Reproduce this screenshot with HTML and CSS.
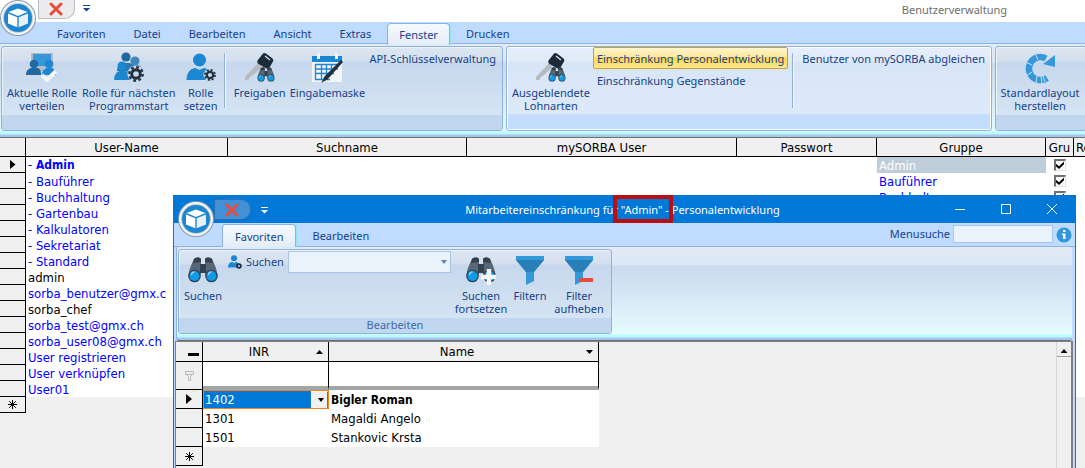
FILE: index.html
```html
<!DOCTYPE html>
<html lang="de">
<head>
    <meta charset="UTF-8">
    <meta name="viewport" content="width=device-width, initial-scale=1.0">
    <title>Benutzerverwaltung</title>
    <link rel="stylesheet" href="styles.css">
</head>
<body>

    <!-- Icons -->
    <svg class="sprite" aria-hidden="true">
        <symbol id="cube" viewBox="0 0 38 38">
            <circle cx="19" cy="19" r="18" fill="#8d9aa8"/>
            <circle cx="19" cy="19" r="17" fill="#f4f6f8"/>
            <circle cx="19" cy="19" r="15" fill="#c3cad2"/>
            <circle cx="19" cy="19" r="14" fill="#1c86d1"/>
            <path d="M19 9.500l9.500 3.500L19 17l-9.500-4z" fill="#fff"/>
            <path d="M9 14.500l9.300 3.700v10L9 24.500z" fill="#fff"/>
            <path d="M29 14.500l-9.300 3.700v10l9.300-3.700z" fill="#e6f1fa"/>
        </symbol>
        <symbol id="cross" viewBox="0 0 14 14">
            <path d="M2 2l10 10M12 2L2 12" stroke="#e74c3c" stroke-width="3" stroke-linecap="round"/>
        </symbol>
        <symbol id="person" viewBox="0 0 28 28">
            <circle cx="13" cy="7" r="6.500" fill="#1c86d1"/>
            <path d="M0 27c0-7 4-12 9-12l4 2 4-2c5 0 9 5 9 12z" fill="#1c86d1"/>
        </symbol>
        <symbol id="gear" viewBox="0 0 16 16">
            <circle cx="8" cy="8" r="4.300" fill="none" stroke="#22313f" stroke-width="3"/>
            <circle cx="8" cy="8" r="6.700" fill="none" stroke="#22313f" stroke-width="2.400" stroke-dasharray="2.700 2.560"/>
        </symbol>
        <symbol id="binoculars" viewBox="0 0 30 26">
            <path d="M6 2c2-2 6-2 7 0v15H1C1 11 4 7 6 2z" fill="#566778"/>
            <path d="M24 2c-2-2-6-2-7 0v15h12C29 11 26 7 24 2z" fill="#566778"/>
            <path d="M6 2c2-2 6-2 7 0v3L5 6zM24 2c-2-2-6-2-7 0v3l8 1z" fill="#34424f"/>
            <path d="M12 7h6v9h-6z" fill="#34424f"/>
            <circle cx="6.500" cy="19" r="6.300" fill="#34424f"/>
            <circle cx="23.500" cy="19" r="6.300" fill="#34424f"/>
            <circle cx="6.500" cy="19" r="5" fill="#0d9ae6"/>
            <circle cx="23.500" cy="19" r="5" fill="#0d9ae6"/>
            <path d="M3.500 18a3 3 0 0 1 3-3M20.500 18a3 3 0 0 1 3-3" fill="none" stroke="#8fd3f8" stroke-width="1.300"/>
        </symbol>
        <symbol id="roles-assign" viewBox="0 0 32 32">
            <path d="M5 1h22v15H5z" fill="#b4bcc3"/>
            <path d="M7 2h18v12H7z" fill="#3598db"/>
            <path d="M13 16h5v3h-5z" fill="#b4bcc3"/>
            <circle cx="8" cy="12" r="4.300" fill="#2068a0"/>
            <path d="M0 23c0-5 3-7 6-7h5c3 0 4 2 4 7z" fill="#2068a0"/>
            <circle cx="23" cy="12" r="4.300" fill="#1c86d1"/>
            <path d="M16 23c0-5 3-7 5-7h4c3 0 5 2 5 7z" fill="#1c86d1"/>
            <path d="M16 23l5 5 9-9" fill="none" stroke="#f4f6f8" stroke-width="4"/>
        </symbol>
        <symbol id="roles-next" viewBox="0 0 32 32">
            <circle cx="22" cy="9" r="4.600" fill="#3e88bb"/>
            <path d="M14 21c0-5 3-8 6-8h4c3 0 5 2 5 6v2z" fill="#3e88bb"/>
            <circle cx="13" cy="5" r="4.600" fill="#2068a0"/>
            <path d="M4 19c0-5 3-8 6-8h6c3 0 5 3 5 8z" fill="#2a78b0"/>
            <circle cx="9" cy="14" r="4.500" fill="#1c86d1"/>
            <path d="M1 28c0-5 3-9 6-9h5c4 0 7 3 7 9z" fill="#1c86d1"/>
            <circle cx="23" cy="22" r="8.600" fill="#c9d9ea"/>
            <use href="#gear" x="15" y="14" width="16" height="16"/>
        </symbol>
        <symbol id="role-set" viewBox="0 0 32 32">
            <use href="#person" x="1" y="1" width="29" height="28"/>
            <circle cx="25" cy="23" r="6.500" fill="#c9d9ea"/>
            <use href="#gear" x="19" y="17" width="12" height="12"/>
        </symbol>
        <symbol id="key" viewBox="0 0 32 32">
            <path d="M14 11L1 25v3h3l2-3 3-2 9-8z" fill="#b4babf"/>
            <path d="M19 1.500q1.500-1 3 0l6.500 5q1.500 1.500.5 3l-3.500 6q-1 1.500-3 1l-8-4.500q-2-1.500-1-3.500z" fill="#1c2b39"/>
            <path d="M21 4l5 4" stroke="#dfe6ec" stroke-width="1.200"/>
            <use href="#binoculars" x="13" y="15" width="18" height="15"/>
        </symbol>
        <symbol id="calendar" viewBox="0 0 32 32">
            <path d="M1 4h30v26H1z" fill="#f2f4f6"/>
            <path d="M1 4h30v6H1z" fill="#1c86d1"/>
            <path d="M6 1h3v6H6zM24 1h3v6h-3z" fill="#f2f4f6"/>
            <path d="M4 12.500h23M4 17h23M4 21.500h19M4 27.500h15M4.500 12v16M10.500 12v16M15.500 12v15M20.500 12v11M26.500 12v4" stroke="#1c86d1" stroke-width="1.300"/>
            <path d="M30 9l1 1-15 17-4 2 2-4z" fill="#22313f" stroke="#22313f" stroke-width="1.500"/>
        </symbol>
        <symbol id="reload" viewBox="0 0 32 32">
            <path d="M22 6.500A11.500 11.500 0 1 0 23 26" fill="none" stroke="#3598db" stroke-width="6.500"/>
            <path d="M31 3v12l-12-3z" fill="#3598db"/>
            <path d="M11 1l3 7M1 10l7 3M2 24l6-4M12 31l1-7M18 31l-1-7M21 30l-2-6" stroke="#d3e0f0"/>
        </symbol>
        <symbol id="search" viewBox="0 0 32 32">
            <use href="#binoculars" x="1" y="2" width="30" height="26"/>
        </symbol>
        <symbol id="search-next" viewBox="0 0 32 32">
            <use href="#binoculars" x="1" y="2" width="30" height="26"/>
            <path d="M24 14v16M16 22h15" stroke="#f4f6f8" stroke-width="4.500"/>
        </symbol>
        <symbol id="filter" viewBox="0 0 32 32">
            <path d="M2 1h28v4L20 17v9l-8 4V17L2 5z" fill="#3598db"/>
            <path d="M2 5h28L20 17h-8z" fill="#2980b9"/>
        </symbol>
        <symbol id="filter-off" viewBox="0 0 32 32">
            <use href="#filter" width="32" height="32"/>
            <path d="M16 23h14v4H16z" fill="#e74c3c"/>
        </symbol>
        <symbol id="info" viewBox="0 0 16 16">
            <circle cx="8" cy="8" r="7.500" fill="#2f97dd"/>
            <path d="M7 3h2.500v2H7zM6 6.500h3.500V12H7V8H6z" fill="#fff"/>
        </symbol>
        <symbol id="more" viewBox="0 0 7 7">
            <path d="M0 0h7v1H0zM0 3h7L3.500 6.500z" fill="currentColor"/>
        </symbol>
        <symbol id="star" viewBox="0 0 9 9">
            <path d="M4.500 0v9M0 4.500h9M1.200 1.200l6.600 6.600M7.800 1.200L1.200 7.800" stroke="#000"/>
        </symbol>
    </svg>

    <div class="window">
        <header class="titlebar">
            <button class="orb" aria-label="Menü"><svg><use href="#cube"/></svg></button>
            <div class="quick">
                <button aria-label="Schliessen"><svg><use href="#cross"/></svg></button>
            </div>
            <button class="quick-more" aria-label="Anpassen"><svg><use href="#more"/></svg></button>
            <h1>Benutzerverwaltung</h1>
        </header>

        <nav class="tabs">
            <button>Favoriten</button>
            <button>Datei</button>
            <button>Bearbeiten</button>
            <button>Ansicht</button>
            <button>Extras</button>
            <button class="active">Fenster</button>
            <button>Drucken</button>
        </nav>

        <div class="ribbon">
            <section class="group group-roles">
                <div class="tools">
                    <button class="tool"><svg><use href="#roles-assign"/></svg>Aktuelle Rolle<br>verteilen</button>
                    <button class="tool wide"><svg><use href="#roles-next"/></svg>Rolle für nächsten<br>Programmstart</button>
                    <button class="tool slim"><svg><use href="#role-set"/></svg>Rolle<br>setzen</button>
                    <span class="divider"></span>
                    <button class="tool small"><svg><use href="#key"/></svg>Freigaben</button>
                    <button class="tool"><svg><use href="#calendar"/></svg>Eingabemaske</button>
                    <div class="links">
                        <button>API-Schlüsselverwaltung</button>
                    </div>
                </div>
                <div class="caption"></div>
            </section>
            <section class="group group-limits hot">
                <div class="tools">
                    <button class="tool medium"><svg><use href="#key"/></svg>Ausgeblendete<br>Lohnarten</button>
                    <div class="links">
                        <button class="selected">Einschränkung Personalentwicklung</button>
                        <button>Einschränkung Gegenstände</button>
                    </div>
                    <span class="divider"></span>
                    <div class="links">
                        <button>Benutzer von mySORBA abgleichen</button>
                    </div>
                </div>
                <div class="caption"></div>
            </section>
            <section class="group group-layout">
                <div class="tools">
                    <button class="tool medium"><svg><use href="#reload"/></svg>Standardlayout<br>herstellen</button>
                </div>
                <div class="caption"></div>
            </section>
        </div>

        <table class="grid users">
            <colgroup>
                <col class="c-head"><col class="c-user"><col class="c-search"><col class="c-mysorba"><col class="c-pass"><col class="c-group"><col class="c-gru"><col>
            </colgroup>
            <thead>
                <tr><th></th><th>User-Name</th><th>Suchname</th><th>mySORBA User</th><th>Passwort</th><th>Gruppe</th><th>Gru</th><th class="cut">Re</th></tr>
            </thead>
            <tbody>
                <tr><th><i class="current"></i></th><td>- <b>Admin</b></td><td></td><td></td><td></td><td class="marked">Admin</td><td class="check"><input type="checkbox" aria-label="Gruppe Admin" checked></td><td></td></tr>
                <tr><th></th><td>- Bauführer</td><td></td><td></td><td></td><td>Bauführer</td><td class="check"><input type="checkbox" aria-label="Gruppe Bauführer" checked></td><td></td></tr>
                <tr><th></th><td>- Buchhaltung</td><td></td><td></td><td></td><td>Buchhaltung</td><td class="check"><input type="checkbox" aria-label="Gruppe Buchhaltung" checked></td><td></td></tr>
                <tr><th></th><td>- Gartenbau</td><td colspan="6"></td></tr>
                <tr><th></th><td>- Kalkulatoren</td><td colspan="6"></td></tr>
                <tr><th></th><td>- Sekretariat</td><td colspan="6"></td></tr>
                <tr><th></th><td>- Standard</td><td colspan="6"></td></tr>
                <tr><th></th><td class="plain">admin</td><td colspan="6"></td></tr>
                <tr><th></th><td>sorba_benutzer@gmx.c</td><td colspan="6"></td></tr>
                <tr><th></th><td class="plain">sorba_chef</td><td colspan="6"></td></tr>
                <tr><th></th><td>sorba_test@gmx.ch</td><td colspan="6"></td></tr>
                <tr><th></th><td>sorba_user08@gmx.ch</td><td colspan="6"></td></tr>
                <tr><th></th><td>User registrieren</td><td colspan="6"></td></tr>
                <tr><th></th><td>User verknüpfen</td><td colspan="6"></td></tr>
                <tr><th></th><td>User01</td><td colspan="6"></td></tr>
                <tr class="new"><th><svg><use href="#star"/></svg></th><td colspan="7"></td></tr>
            </tbody>
        </table>
    </div>

    <div class="dialog" role="dialog" aria-labelledby="dialog-title">
        <header class="titlebar">
            <button class="orb" aria-label="Menü"><svg><use href="#cube"/></svg></button>
            <div class="quick">
                <button aria-label="Schliessen"><svg><use href="#cross"/></svg></button>
            </div>
            <button class="quick-more" aria-label="Anpassen"><svg><use href="#more"/></svg></button>
            <h2 id="dialog-title">Mitarbeitereinschränkung für <span class="mark">"Admin" -</span> Personalentwicklung</h2>
            <div class="controls">
                <button aria-label="Minimieren"><svg viewBox="0 0 10 10"><path d="M0 5.500h10"/></svg></button>
                <button aria-label="Maximieren"><svg viewBox="0 0 10 10"><path d="M.5.5h9v9h-9z"/></svg></button>
                <button aria-label="Fenster schliessen"><svg viewBox="0 0 10 10"><path d="M0 0l10 10M10 0L0 10"/></svg></button>
            </div>
        </header>

        <nav class="tabs">
            <button class="active">Favoriten</button>
            <button>Bearbeiten</button>
            <label class="menu-search">Menusuche <input type="text"></label>
            <button class="info" aria-label="Info"><svg><use href="#info"/></svg></button>
        </nav>

        <div class="ribbon">
            <section class="group group-edit">
                <div class="tools">
                    <button class="tool slim"><svg><use href="#search"/></svg>Suchen</button>
                    <div class="finder">
                        <svg viewBox="0 0 14 14"><use href="#person" width="13" height="13"/><circle cx="11" cy="11" r="2.800" fill="#22313f"/><circle cx="11" cy="11" r="1" fill="#c9d9ea"/></svg>
                        <label for="finder">Suchen</label>
                        <span class="combo"><select id="finder"><option></option></select></span>
                    </div>
                    <button class="tool small"><svg><use href="#search-next"/></svg>Suchen<br>fortsetzen</button>
                    <button class="tool narrow"><svg><use href="#filter"/></svg>Filtern</button>
                    <button class="tool small"><svg><use href="#filter-off"/></svg>Filter<br>aufheben</button>
                </div>
                <div class="caption">Bearbeiten</div>
            </section>
        </div>

        <div class="pane">
            <table class="grid staff">
                <colgroup><col class="c-head"><col class="c-inr"><col class="c-name"></colgroup>
                <thead>
                    <tr><th><i class="minus"></i></th><th class="sortable">INR<i class="up"></i></th><th class="sortable">Name<i class="down"></i></th></tr>
                </thead>
                <tbody>
                    <tr class="filters">
                        <th><svg viewBox="0 0 9 11"><path d="M.5 1.500h8v3h-8zM1.500 4.500l2 2v4h2v-4l2-2" fill="none" stroke="#b8b8b8"/></svg></th>
                        <td><input type="text" aria-label="Filter INR"></td>
                        <td><input type="text" aria-label="Filter Name"></td>
                    </tr>
                    <tr>
                        <th><i class="current"></i></th>
                        <td class="editing"><span class="combo"><select aria-label="INR"><option>1402</option></select></span></td>
                        <td><b>Bigler Roman</b></td>
                    </tr>
                    <tr><th></th><td>1301</td><td>Magaldi Angelo</td></tr>
                    <tr><th></th><td>1501</td><td>Stankovic Krsta</td></tr>
                    <tr class="new"><th><svg><use href="#star"/></svg></th><td colspan="2"></td></tr>
                </tbody>
            </table>
            <div class="scrollbar"><button aria-label="Nach oben"><i class="up"></i></button></div>
        </div>
    </div>

</body>
</html>
```
FILE: styles.css
```css
* {
    box-sizing: border-box;
}
body {
    margin: 0;
    height: 100vh;
    overflow: hidden;
    background: #f0f0f0;
    color: #15428b;
    font: 11px/13px "Noto Sans", "Open Sans", sans-serif;
}
button {
    border: 0;
    padding: 0;
    background: none;
    color: inherit;
    font: inherit;
    white-space: nowrap;
}
svg {
    display: block;
}
.sprite {
    position: absolute;
    width: 0;
    height: 0;
}

/* Title bars */
.titlebar {
    position: relative;
    display: flex;
    align-items: flex-start;
    height: 22px;
    background: #fff;
}
.orb {
    position: absolute;
    left: -1px;
    top: -1px;
    z-index: 2;
}
.orb svg {
    width: 38px;
    height: 38px;
}
.quick {
    width: 37px;
    height: 19px;
    margin-left: 38px;
    padding: 2px 0 0 9px;
    border: 1px solid #b9bdc2;
    border-top: 0;
    border-radius: 0 0 10px 0;
    background: #ececee;
}
.quick svg {
    width: 16px;
    height: 14px;
}
.quick-more {
    margin: 5px 0 0 8px;
    color: #15428b;
}
.quick-more svg {
    width: 7px;
    height: 7px;
}
h1, h2 {
    margin: 0;
    font-size: 11px;
    font-weight: normal;
    white-space: nowrap;
}
h1 {
    margin: 3px 78px 0 auto;
    color: #6d6d6d;
}

/* Tabs */
.tabs {
    display: flex;
    height: 22px;
    padding-left: 43px;
    border-bottom: 1px solid #8db2e3;
    background: #bfdbff;
}
.tabs button {
    padding: 2px 12px 0;
    margin: 0 2px;
}
.tabs .active {
    height: 22px;
    margin-top: 1px;
    padding: 0 11px;
    border: 1px solid #8db2e3;
    border-bottom: 0;
    border-radius: 4px 4px 0 0;
    background: linear-gradient(#f6faff, #e3ecf7);
    box-shadow: 1px 0 1px #8fe4f4;
    z-index: 1;
}

/* Ribbon */
.ribbon {
    display: flex;
    gap: 3px;
    height: 94px;
    padding: 2px 1px 6px;
    border-bottom: 1px solid #707070;
    background: linear-gradient(#e3ebf5, #dce8f6 18px, #c9d9ed 19px, #e5fbff 87px, #b8fafe 88px, #b8fafe 90px, #a9c6ea 91px, #a9c6ea);
    overflow: hidden;
}
.group {
    display: flex;
    flex-direction: column;
    flex: none;
    border: 1px solid #8db2dc;
    border-radius: 3px;
    background: linear-gradient(#dde6f1, #d4dfee 14px, #c6d7ed 15px, #dae8f5);
    box-shadow: inset 1px 1px 0 #edf3fa;
}
.group.hot {
    background: linear-gradient(#e6eefa, #e0eaf8 14px, #d8e5f7 15px, #dfebfa);
    box-shadow: inset 0 0 0 1px #fff;
}
.group-roles {
    width: 502px;
}
.group-limits {
    width: 486px;
}
.group-layout {
    width: 92px;
}
.tools {
    display: flex;
    flex: 1;
    padding: 0 2px;
}
.caption {
    height: 15px;
    background: #c1d7f0;
    color: #3e6aaa;
    text-align: center;
}
.hot .caption {
    margin: 0 1px 1px;
    background: #c5ddfd;
}
.tool {
    display: flex;
    flex-direction: column;
    align-items: center;
    width: 76px;
    padding-top: 5px;
}
.tool svg {
    width: 32px;
    height: 32px;
    margin-bottom: 2px;
}
.tool.wide {
    width: 98px;
}
.tool.medium {
    width: 84px;
}
.tool.small {
    width: 60px;
}
.tool.slim {
    width: 46px;
}
.tool.narrow {
    width: 42px;
}
.divider {
    width: 2px;
    height: 55px;
    margin: 6px 4px 0;
    border-left: 1px solid #8fb1da;
    border-right: 1px solid #f2f7fd;
}
.group-roles .divider {
    margin-left: 0;
}
.links {
    display: flex;
    flex-direction: column;
    align-items: flex-start;
}
.links button {
    height: 22px;
    padding: 0 3px;
    border: 1px solid transparent;
    border-radius: 2px;
}
.links .selected {
    border-color: #c9a13c;
    background: linear-gradient(#fff5cf, #ffe79a 45%, #ffd54a 50%, #ffe98b);
}

/* Data grids */
.grid {
    border-collapse: separate;
    border-spacing: 0;
    table-layout: fixed;
    background: #fff;
    color: #000;
    font: 13px/15px "DejaVu Sans Condensed", "DejaVu Sans", sans-serif;
}
.grid b {
    font-size: 12px;
}
.grid th, .grid td {
    overflow: hidden;
    padding: 0 2px;
    text-align: left;
    white-space: nowrap;
}
.grid th {
    padding: 0;
    border-right: 1px solid #000;
    border-bottom: 1px solid #000;
    background: #f0f0f0;
    font-weight: normal;
    text-align: center;
}
.grid th svg {
    width: 9px;
    height: 9px;
    margin: 0 auto;
}
.grid .new td {
    background: #f0f0f0;
}
.c-head {
    width: 26px;
}
.current {
    display: block;
    width: 6px;
    height: 10px;
    margin: 0 auto;
    background: #000;
    clip-path: polygon(0 0, 100% 50%, 0 100%);
}
.up, .down {
    display: inline-block;
    width: 7px;
    height: 4px;
    background: #000;
}
.up {
    clip-path: polygon(50% 0, 100% 100%, 0 100%);
}
.down {
    clip-path: polygon(0 0, 100% 0, 50% 100%);
}

.users {
    width: 100%;
}
.users thead tr {
    height: 19px;
}
.users tbody tr {
    height: 16px;
}
.users td {
    color: #0000ff;
}
.users .plain {
    color: #000;
}
.users .marked {
    background: #bfccda;
    color: #fff;
}
.users .cut {
    padding-left: 2px;
    border-right: 0;
    text-align: left;
}
.c-user {
    width: 202px;
}
.c-search {
    width: 239px;
}
.c-mysorba {
    width: 270px;
}
.c-pass {
    width: 140px;
}
.c-group {
    width: 169px;
}
.c-gru {
    width: 28px;
}
.grid .check {
    padding: 0;
    line-height: 0;
    text-align: center;
}
.check input {
    appearance: none;
    width: 12px;
    height: 12px;
    margin: 0;
    border: 1px solid #e3e3e3;
    border-top: 2px solid #707070;
    border-left: 2px solid #707070;
    background: #fff;
}
.check input:checked::after {
    content: "";
    display: block;
    width: 8px;
    height: 8px;
    background: #000;
    clip-path: polygon(0 35%, 38% 65%, 100% 5%, 100% 40%, 38% 100%, 0 70%);
}

/* Dialog window */
.dialog {
    position: absolute;
    left: 173px;
    right: 9px;
    top: 195px;
    bottom: 0;
    display: flex;
    flex-direction: column;
    border: 1px solid #0078d7;
    border-width: 0 1px;
    background: #bfdbff;
}
.dialog .titlebar {
    flex: none;
    height: 28px;
    background: #0078d7;
    color: #fff;
}
.dialog .orb {
    left: 3px;
    top: 5px;
}
.dialog .quick {
    height: 21px;
    margin: 4px 0 0 40px;
    padding-top: 3px;
    border: 1px solid #2c6fae;
    border-radius: 0 10px 10px 0;
    background: #4291d6;
}
.dialog .quick-more {
    margin: 12px 0 0 10px;
    color: #fff;
}
h2 {
    flex: 1;
    padding: 8px 0 0 40px;
    text-align: center;
}
.mark {
    position: relative;
}
.mark::after {
    content: "";
    position: absolute;
    inset: -7px -4px -6px -8px;
    border: 4px solid #b90f10;
}
.controls {
    display: flex;
}
.controls button {
    width: 46px;
    height: 28px;
    padding-left: 18px;
}
.controls svg {
    width: 10px;
    height: 10px;
    overflow: visible;
    fill: none;
    stroke: #fff;
}
.dialog .tabs {
    flex: none;
    height: 24px;
    padding-left: 46px;
}
.dialog .tabs .active {
    height: 23px;
    padding: 0 12px;
}
.menu-search {
    display: flex;
    align-items: flex-start;
    gap: 3px;
    margin-left: auto;
    line-height: 22px;
}
.menu-search input {
    width: 100px;
    height: 18px;
    margin-top: 2px;
    border: 1px solid #a9c4e6;
    background: #eaf2fb;
}
.tabs .info {
    width: 16px;
    margin: 0 3px;
    padding: 0;
}
.info svg {
    width: 16px;
    height: 16px;
}
.dialog .ribbon {
    flex: none;
    margin: 0 3px 0 2px;
    border-left: 1px solid #8db2e3;
    border-radius: 3px;
}
.group-edit {
    width: 434px;
}
.group-edit .tools {
    padding: 0 1px;
}
.group-edit .small {
    width: 56px;
}
.finder {
    display: flex;
    align-items: flex-start;
    gap: 4px;
    width: 227px;
    padding: 1px 2px 0 2px;
    line-height: 22px;
}
.finder > svg {
    width: 14px;
    height: 14px;
    margin-top: 4px;
}
.combo {
    position: relative;
    display: block;
    flex: 1;
}
.combo select {
    appearance: none;
    display: block;
    width: 100%;
    height: 22px;
    border: 1px solid #a9c4e6;
    border-radius: 0;
    background: #eaf2fb;
    font: inherit;
}
.combo::after {
    content: "";
    position: absolute;
    right: 4px;
    top: 9px;
    width: 6px;
    height: 4px;
    background: #5f83b3;
    clip-path: polygon(0 0, 100% 0, 50% 100%);
}

.pane {
    display: flex;
    justify-content: space-between;
    align-items: flex-start;
    flex: 1;
    margin: 0 2px 0 1px;
    border: 1px solid #808080;
    border-width: 1px 2px 0 1px;
    background: #f0f0f0;
}
.staff {
    width: 423px;
}
.staff .c-head {
    width: 27px;
}
.c-inr {
    width: 126px;
}
.staff thead tr {
    height: 20px;
}
.staff tbody tr {
    height: 19px;
}
.staff .filters {
    height: 28px;
}
.staff .filters th, .staff .filters td {
    border-bottom: 4px solid #a5a5a5;
}
.staff .filters th {
    border-bottom: 1px solid #000;
}
.staff .filters svg {
    height: 11px;
}
.staff .filters td {
    padding: 0;
    border-right: 1px solid #000;
}
.filters input {
    display: block;
    width: 100%;
    height: 24px;
    border: 0;
    background: #fff;
}
.staff .sortable {
    position: relative;
    padding-right: 13px;
}
.sortable .up, .sortable .down {
    position: absolute;
    right: 5px;
    top: 8px;
}
.minus {
    display: block;
    width: 11px;
    height: 3px;
    margin: 5px 3px 0 auto;
    background: #000;
}
.grid .editing {
    padding: 0;
    border: 1px solid #f58220;
}
.editing select {
    height: 17px;
    padding: 0 1px;
    border: 0;
    background: #0078d7;
    color: #fff;
}
.editing .combo::before {
    content: "";
    position: absolute;
    right: 0;
    top: 0;
    width: 15px;
    height: 17px;
    border: 1px solid #fff;
    border-right-color: #707070;
    border-bottom-color: #707070;
    background: #f0f0f0;
}
.editing .combo::after {
    top: 7px;
    background: #000;
}
.scrollbar {
    align-self: stretch;
    width: 15px;
    border-left: 1px solid #d8d8d8;
}
.scrollbar button {
    display: block;
    width: 14px;
    height: 15px;
    border-bottom: 1px solid #a0a0a0;
    line-height: 8px;
}
```
